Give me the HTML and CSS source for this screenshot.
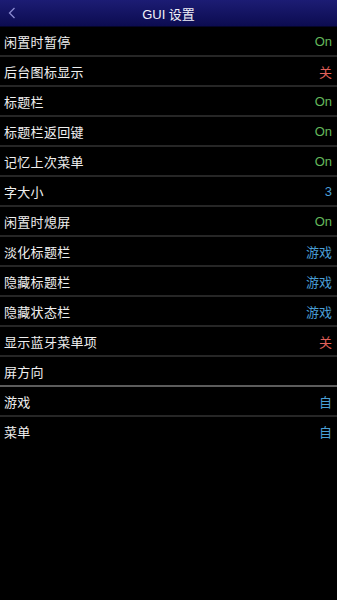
FILE: index.html
```html
<!DOCTYPE html>
<html lang="zh">
<head>
    <meta charset="UTF-8">
    <title>GUI 设置</title>
    <link rel="stylesheet" href="styles.css">
</head>
<body>
    <div class="header">
        <span class="back">
            <svg width="8" height="12" viewBox="0 0 8 12"><path d="M6.5 1 L1.5 6 L6.5 11" fill="none" stroke="#8a8ad0" stroke-width="1.3"/></svg>
        </span>
        <span class="title">GUI 设置</span>
    </div>
    <div class="list">
        <div class="row"><span class="label">闲置时暂停</span><span class="value on">On</span></div>
        <div class="row"><span class="label">后台图标显示</span><span class="value off">关</span></div>
        <div class="row"><span class="label">标题栏</span><span class="value on">On</span></div>
        <div class="row"><span class="label">标题栏返回键</span><span class="value on">On</span></div>
        <div class="row"><span class="label">记忆上次菜单</span><span class="value on">On</span></div>
        <div class="row"><span class="label">字大小</span><span class="value blue">3</span></div>
        <div class="row"><span class="label">闲置时熄屏</span><span class="value on">On</span></div>
        <div class="row"><span class="label">淡化标题栏</span><span class="value blue">游戏</span></div>
        <div class="row"><span class="label">隐藏标题栏</span><span class="value blue">游戏</span></div>
        <div class="row"><span class="label">隐藏状态栏</span><span class="value blue">游戏</span></div>
        <div class="row"><span class="label">显示蓝牙菜单项</span><span class="value off">关</span></div>
        <div class="row group"><span class="label">屏方向</span></div>
        <div class="row"><span class="label">游戏</span><span class="value blue">自</span></div>
        <div class="row last"><span class="label">菜单</span><span class="value blue">自</span></div>
    </div>
</body>
</html>
```

FILE: styles.css
```css
body {
    margin: 0;
    background: #000;
    font-family: "Noto Sans CJK SC", "Liberation Sans", sans-serif;
    color: #f0f0f0;
}
.header {
    position: relative;
    height: 26px;
    background: linear-gradient(#1c1c74, #0c0c50);
    border-bottom: 1px solid #05052a;
    display: flex;
    align-items: center;
    justify-content: center;
}
.back {
    position: absolute;
    left: 8px;
    top: 7px;
    display: flex;
}
.title {
    font-family: "Liberation Sans", "Noto Sans CJK SC", sans-serif;
    font-size: 13px;
    color: #f2f2f8;
}
.row {
    height: 28px;
    border-bottom: 2px solid #262626;
    display: flex;
    align-items: center;
    justify-content: space-between;
    padding: 0 5px 0 4px;
}
.row.group {
    border-bottom-color: #5c5c5c;
}
.row.last {
    border-bottom: none;
}
.label {
    font-size: 13px;
    letter-spacing: 0.3px;
}
.value {
    font-family: "Liberation Sans", "Noto Sans CJK SC", sans-serif;
    font-size: 13px;
}
.value.on {
    color: #64b85c;
}
.value.off {
    color: #e0605a;
}
.value.blue {
    color: #4a9fd6;
}
```
